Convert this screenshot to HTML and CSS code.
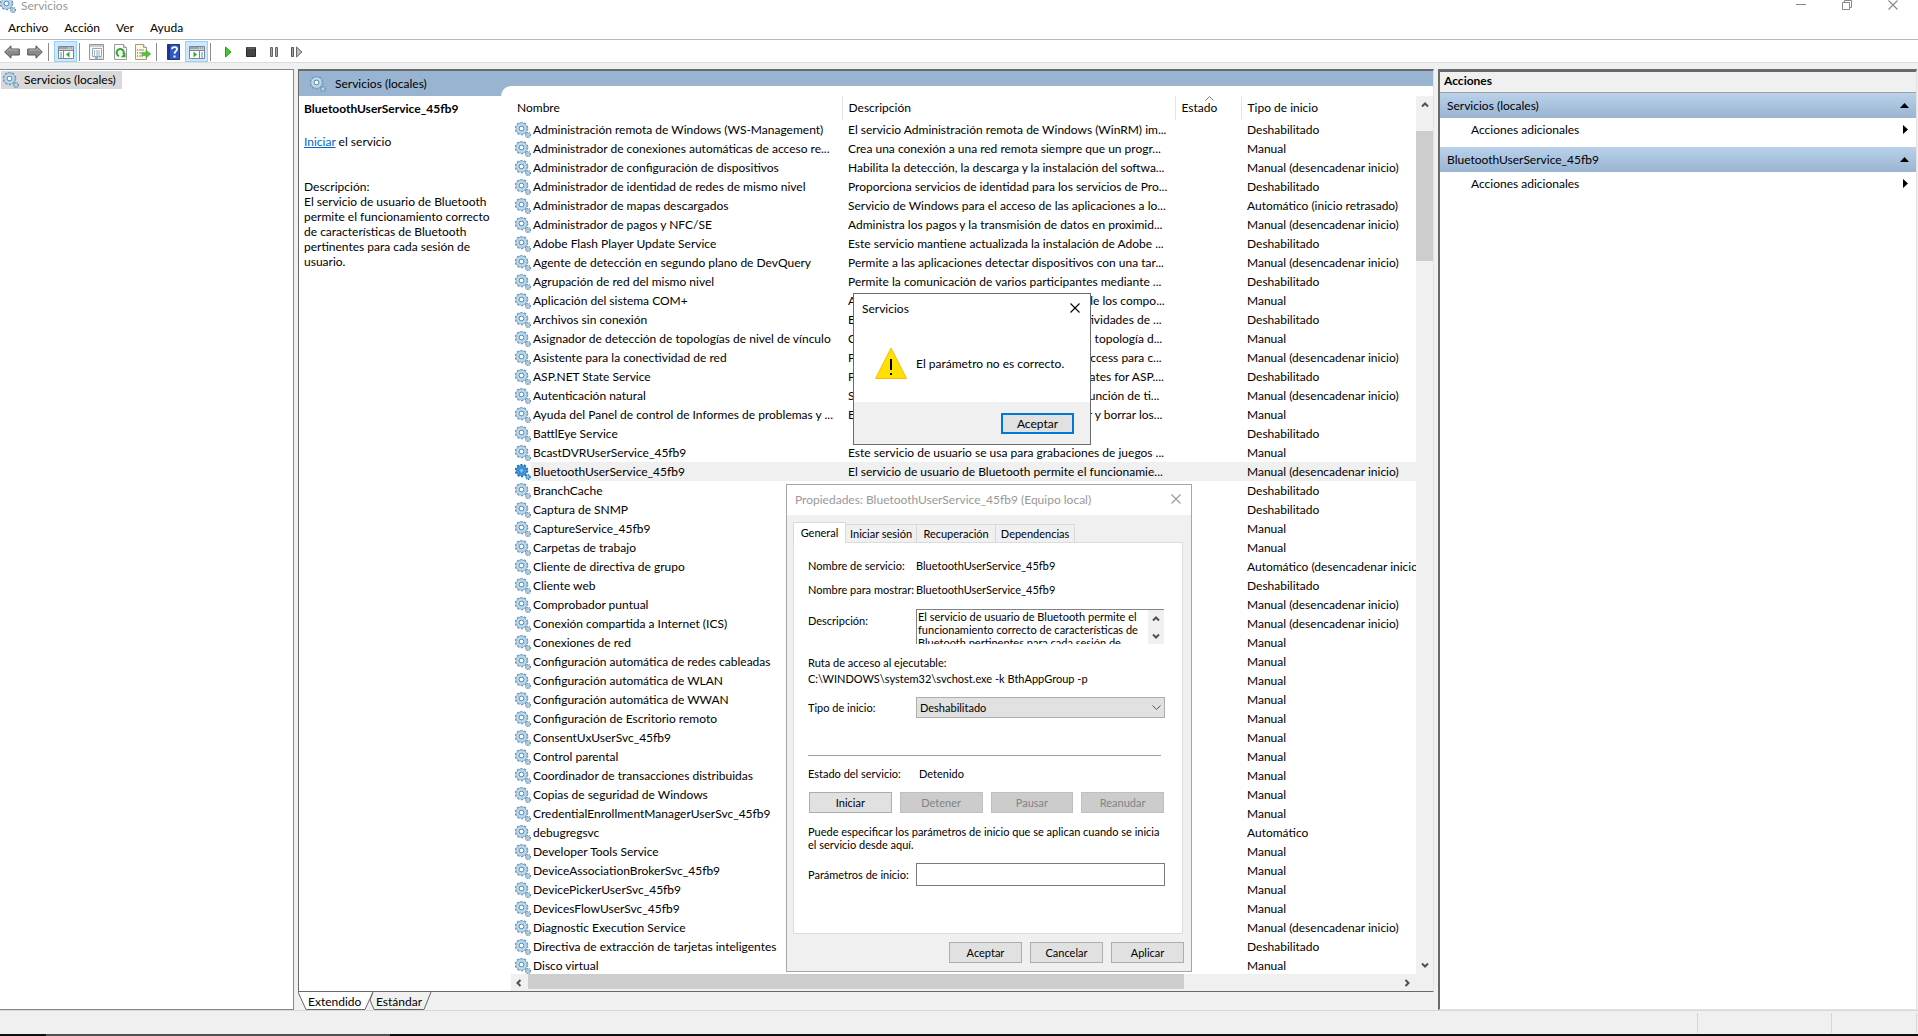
FILE: index.html
```html
<!DOCTYPE html>
<html lang="es">
<head>
  <meta charset="UTF-8" />
  <title>Servicios</title>
  <link rel="stylesheet" href="styles.css">
</head>
<body>

  <svg class="symbols" aria-hidden="true">
    <symbol id="gear" viewBox="0 0 16 16">
      <circle cx="6.5" cy="6.5" r="5.8" fill="none" stroke="#6796b8" stroke-width="2" stroke-dasharray="2.05 1.6" />
      <circle cx="6.5" cy="6.5" r="4.1" fill="none" stroke="#7ea9c6" stroke-width="3.6" />
      <circle cx="6.5" cy="6.5" r="4" fill="none" stroke="#b9d9ee" stroke-width="2.4" />
      <circle cx="6.5" cy="6.5" r="2.3" fill="#fff" stroke="#587f9c" stroke-width="0.9" />
      <circle cx="13" cy="13" r="2.4" fill="none" stroke="#6796b8" stroke-width="1.5" stroke-dasharray="1.1 0.7" />
      <circle cx="13" cy="13" r="1.4" fill="#fff" stroke="#8fb5cf" stroke-width="1.3" />
    </symbol>
    <symbol id="gear-selected" viewBox="0 0 16 16">
      <circle cx="6.5" cy="6.5" r="5.8" fill="none" stroke="#1c70b8" stroke-width="2" stroke-dasharray="2.05 1.6" />
      <circle cx="6.5" cy="6.5" r="3.9" fill="none" stroke="#2f86cc" stroke-width="3.4" />
      <circle cx="6.5" cy="6.5" r="3.7" fill="none" stroke="#5ba6de" stroke-width="1.6" stroke-dasharray="1 1" />
      <circle cx="6.5" cy="6.5" r="2.1" fill="#8cc6f2" stroke="#1c66aa" stroke-width="0.7" />
      <circle cx="13" cy="13" r="2.1" fill="#8cc6f2" stroke="#2277bd" stroke-width="1.6" stroke-dasharray="1.1 0.7" />
    </symbol>
    <symbol id="close" viewBox="0 0 10 10">
      <path d="M0.5 0.5 9.5 9.5M9.5 0.5 0.5 9.5" fill="none" stroke="currentColor" stroke-width="1.1" />
    </symbol>
    <symbol id="arrow-up" viewBox="0 0 8 8">
      <path d="M1 5.5 4 2.5 7 5.5" fill="none" stroke="currentColor" stroke-width="2" />
    </symbol>
    <symbol id="arrow-down" viewBox="0 0 8 8">
      <path d="M1 2.5 4 5.5 7 2.5" fill="none" stroke="currentColor" stroke-width="2" />
    </symbol>
    <symbol id="arrow-left" viewBox="0 0 8 8">
      <path d="M5.5 1 2.5 4 5.5 7" fill="none" stroke="currentColor" stroke-width="2" />
    </symbol>
    <symbol id="arrow-right" viewBox="0 0 8 8">
      <path d="M2.5 1 5.5 4 2.5 7" fill="none" stroke="currentColor" stroke-width="2" />
    </symbol>
  </svg>

  <header class="titlebar">
    <svg class="icon"><use href="#gear" /></svg>
    <span class="titlebar-text">Servicios</span>
    <div class="window-buttons">
      <button type="button" aria-label="Minimizar">
        <svg width="10" height="10"><path d="M0 4.5h10" stroke="#888" /></svg>
      </button>
      <button type="button" aria-label="Restaurar">
        <svg width="10" height="10" fill="none" stroke="#888"><path d="M.5 2.5h7v7h-7zM2.5 2V.5h7v7H8" /></svg>
      </button>
      <button type="button" aria-label="Cerrar">
        <svg width="10" height="10"><use href="#close" /></svg>
      </button>
    </div>
  </header>

  <nav class="menubar">
    <button type="button">Archivo</button>
    <button type="button">Acción</button>
    <button type="button">Ver</button>
    <button type="button">Ayuda</button>
  </nav>

  <div class="toolbar">
    <button type="button" aria-label="Atrás">
      <svg class="icon" viewBox="0 0 16 16"><path d="M.7 8 7 1.8V5h8.3v6H7v3.2z" fill="#8a8a8a" stroke="#555" /><path d="M2.5 7.5 6 4.5V6h8.3" fill="none" stroke="#b5b5b5" /></svg>
    </button>
    <button type="button" aria-label="Adelante">
      <svg class="icon" viewBox="0 0 16 16"><path d="M15.3 8 9 1.8V5H.7v6H9v3.2z" fill="#8a8a8a" stroke="#555" /><path d="M13.5 7.5 10 4.5V6H1.7" fill="none" stroke="#b5b5b5" /></svg>
    </button>
    <span class="separator"></span>
    <button type="button" class="active" aria-label="Mostrar u ocultar árbol de consola">
      <svg class="icon" viewBox="0 0 16 16"><path d="M.5 2.5h15v12H.5z" fill="#fff" stroke="#7d8791" /><path d="M1 3h14v2.5H1z" fill="#9aa4ae" /><path d="M10 4h1M12 4h1M14 4h1" stroke="#fff" /><path d="M1 6.5h14M5.5 7v7" stroke="#7d8791" /><path d="M2 9h2M2 11h2M2 13h2" stroke="#4a8bc2" /><path d="M11.5 7.5v6L8 10.5z" fill="#3aa52a" /></svg>
    </button>
    <span class="separator"></span>
    <button type="button" aria-label="Propiedades">
      <svg class="icon" viewBox="0 0 16 16"><path d="M.5.5h14v15H.5z" fill="#f4f6f8" stroke="#8b959e" /><path d="M1 2h13" stroke="#c5ccd3" stroke-width="2" /><path d="M3.5 4.5h9v8h-9z" fill="#fff" stroke="#9aa8b5" /><path d="M5 7h1M5 9h1M5 11h1" stroke="#3a7dbb" /><path d="M7 7h4M7 9h4M7 11h4" stroke="#9aa8b5" /><path d="M6 14h3" stroke="#35a7df" stroke-width="1.5" /><path d="M10 14h3" stroke="#aab4bd" /></svg>
    </button>
    <button type="button" aria-label="Actualizar">
      <svg class="icon" viewBox="0 0 16 16"><path d="M2.5.5h9l3 3v12h-12z" fill="#fafafa" stroke="#9a9a9a" /><path d="M11.5.5v3h3" fill="#ddd" stroke="#9a9a9a" /><path d="M7 12A3.6 3.6 0 1 1 11.3 10.5" fill="none" stroke="#35a52d" stroke-width="2" /><path d="M13.5 8.5v4.8H8.7z" fill="#35a52d" /></svg>
    </button>
    <button type="button" aria-label="Exportar lista">
      <svg class="icon" viewBox="0 0 16 16"><path d="M.5.5h8l3 3v12H.5z" fill="#fdf8dc" stroke="#a79b78" /><path d="M8.5.5v3h3" fill="#eee" stroke="#a79b78" /><path d="M2 6h1M2 9h1M2 12h1" stroke="#444" /><path d="M4 6h5M4 9h3M4 12h4" stroke="#7d8fb0" /><path d="M7 8.5h4V6l4.8 4-4.8 4v-2.5H7z" fill="#55c03c" stroke="#3c9e2b" stroke-width=".5" /></svg>
    </button>
    <span class="separator"></span>
    <button type="button" aria-label="Ayuda">
      <svg class="icon" viewBox="0 0 16 16"><path d="M1.5.5h12v15h-12z" fill="#2f57c4" stroke="#1c3787" /><path d="M2 1h2v14H2z" fill="#1c3787" /><path d="M6 5.2C6 2.3 11 2.3 11 5.2 11 7.2 8.5 7.2 8.5 9.8" fill="none" stroke="#fff" stroke-width="1.8" /><path d="M7.5 11.5h2v2h-2z" fill="#fff" /></svg>
    </button>
    <button type="button" class="active" aria-label="Mostrar u ocultar panel de acciones">
      <svg class="icon" viewBox="0 0 16 16"><path d="M.5 2.5h15v12H.5z" fill="#fff" stroke="#7d8791" /><path d="M1 3h14v2.5H1z" fill="#9aa4ae" /><path d="M10 4h1M12 4h1M14 4h1" stroke="#fff" /><path d="M1 6.5h14M10.5 7v7" stroke="#7d8791" /><path d="M12 9h2M12 11h2M12 13h2" stroke="#4a8bc2" /><path d="M4.5 7.5v6L8 10.5z" fill="#3aa52a" /></svg>
    </button>
    <span class="separator"></span>
    <button type="button" aria-label="Iniciar el servicio">
      <svg class="icon" viewBox="0 0 16 16"><path d="M5.5 3v10l5.5-5z" fill="#3ecb2c" stroke="#2a9a1d" /></svg>
    </button>
    <button type="button" aria-label="Detener el servicio">
      <svg class="icon" viewBox="0 0 16 16"><path d="M3.500 3.500h9v9h-9z" fill="#444" stroke="#2b2b2b" /><path d="M4 4h8" stroke="#777" /></svg>
    </button>
    <button type="button" aria-label="Pausar el servicio">
      <svg class="icon" viewBox="0 0 16 16"><path d="M4.500 3.500h2v9h-2zM9.500 3.500h2v9h-2z" fill="#a5a5a5" stroke="#666" /></svg>
    </button>
    <button type="button" aria-label="Reiniciar el servicio">
      <svg class="icon" viewBox="0 0 16 16"><path d="M2.500 3.500h2v9h-2z" fill="#a5a5a5" stroke="#555" /><path d="M7.500 3v10l5.500-5z" fill="#bdbdbd" stroke="#6a6a6a" /></svg>
    </button>
  </div>

  <main class="console">
    <aside class="tree">
      <a href="#" class="tree-item"><svg class="icon"><use href="#gear" /></svg>Servicios (locales)</a>
    </aside>

    <section class="center">
      <div class="view">
        <div class="banner"><svg class="icon"><use href="#gear" /></svg>Servicios (locales)</div>
        <div class="view-body">
          <div class="detail">
            <h2>BluetoothUserService_45fb9</h2>
            <p class="detail-action"><a href="#">Iniciar</a> el servicio</p>
            <p>Descripción:<br>El servicio de usuario de Bluetooth permite el funcionamiento correcto de características de Bluetooth pertinentes para cada sesión de usuario.</p>
          </div>
          <div class="list">
            <div class="list-scroll">
              <table>
                <thead>
                  <tr>
                    <th class="col-name">Nombre</th>
                    <th class="col-desc">Descripción</th>
                    <th class="col-state">Estado<svg class="sort" width="9" height="5"><path d="M.5 4.5 4.5.5l4 4" fill="none" stroke="#777" /></svg></th>
                    <th>Tipo de inicio</th>
                  </tr>
                </thead>
                <tbody id="services"></tbody>
              </table>
            </div>
            <div class="vscroll">
              <svg class="arrow"><use href="#arrow-up" /></svg>
              <div class="vtrack"><div class="vthumb"></div></div>
              <svg class="arrow"><use href="#arrow-down" /></svg>
            </div>
            <div class="hscroll">
              <svg class="arrow"><use href="#arrow-left" /></svg>
              <div class="htrack"><div class="hthumb"></div></div>
              <svg class="arrow"><use href="#arrow-right" /></svg>
            </div>
          </div>
        </div>
      </div>
      <div class="view-tabs">
        <button type="button" class="view-tab">
          <svg width="76" height="18"><path d="M0 0 8 17.5H67L75 0" fill="#fff" stroke="#666" /></svg>
          <span>Extendido</span>
        </button>
        <button type="button" class="view-tab second">
          <svg width="64" height="18"><path d="M4 0 1 8 5 17.5H55L62 0" fill="#f0f0f0" stroke="#666" /></svg>
          <span>Estándar</span>
        </button>
      </div>
    </section>

    <aside class="actions">
      <h2>Acciones</h2>
      <div class="group">Servicios (locales)<svg width="9" height="5"><path d="M0 5 4.5 0 9 5z" /></svg></div>
      <a href="#" class="action">Acciones adicionales<svg width="5" height="9"><path d="M0 0 5 4.5 0 9z" /></svg></a>
      <div class="group">BluetoothUserService_45fb9<svg width="9" height="5"><path d="M0 5 4.5 0 9 5z" /></svg></div>
      <a href="#" class="action">Acciones adicionales<svg width="5" height="9"><path d="M0 0 5 4.5 0 9z" /></svg></a>
    </aside>
  </main>

  <footer class="statusbar">
    <span class="status-main"></span>
    <span class="status-mid"></span>
    <span class="status-end"></span>
  </footer>
  <div class="taskbar"><span></span></div>

  <div class="window properties" role="dialog" aria-label="Propiedades">
    <div class="window-title">
      <span>Propiedades: BluetoothUserService_45fb9 (Equipo local)</span>
      <button type="button" aria-label="Cerrar"><svg width="10" height="10"><use href="#close" /></svg></button>
    </div>
    <div class="tabs">
      <button type="button" class="tab tab-current">General</button>
      <button type="button" class="tab">Iniciar sesión</button>
      <button type="button" class="tab">Recuperación</button>
      <button type="button" class="tab">Dependencias</button>
    </div>
    <form class="panel">
      <div class="field"><span>Nombre de servicio:</span><span>BluetoothUserService_45fb9</span></div>
      <div class="field"><span>Nombre para mostrar:</span><span>BluetoothUserService_45fb9</span></div>
      <div class="field field-desc">
        <label for="description">Descripción:</label>
        <div class="memo">
          <textarea id="description" readonly>El servicio de usuario de Bluetooth permite el
funcionamiento correcto de características de
Bluetooth pertinentes para cada sesión de
usuario.</textarea>
          <div class="memo-scroll">
            <svg class="arrow"><use href="#arrow-up" /></svg>
            <svg class="arrow"><use href="#arrow-down" /></svg>
          </div>
        </div>
      </div>
      <div class="path">Ruta de acceso al ejecutable:<br>C:\WINDOWS\system32\svchost.exe -k BthAppGroup -p</div>
      <div class="field field-type">
        <label for="startup">Tipo de inicio:</label>
        <div class="select">
          <select id="startup"><option>Deshabilitado</option></select>
          <svg width="9" height="5"><path d="M.5.5l4 4 4-4" fill="none" stroke="#555" /></svg>
        </div>
      </div>
      <hr>
      <div class="field field-state"><span>Estado del servicio:</span><span>Detenido</span></div>
      <div class="service-buttons">
        <button type="button">Iniciar</button>
        <button type="button" disabled>Detener</button>
        <button type="button" disabled>Pausar</button>
        <button type="button" disabled>Reanudar</button>
      </div>
      <p class="hint">Puede especificar los parámetros de inicio que se aplican cuando se inicia<br>el servicio desde aquí.</p>
      <div class="field">
        <label for="params">Parámetros de inicio:</label>
        <input type="text" id="params">
      </div>
    </form>
    <div class="window-footer">
      <button type="button">Aceptar</button>
      <button type="button">Cancelar</button>
      <button type="button">Aplicar</button>
    </div>
  </div>

  <div class="window message" role="alertdialog" aria-label="Servicios">
    <div class="window-title">
      <span>Servicios</span>
      <button type="button" aria-label="Cerrar"><svg width="10" height="10"><use href="#close" /></svg></button>
    </div>
    <div class="message-body">
      <svg width="32" height="32" viewBox="0 0 32 32">
        <path d="M16 1 31.5 31.5H.5z" fill="#ffe100" stroke="#fdb913" stroke-linejoin="round" />
        <path d="M15 12h2v11h-2zM15 26h2v2h-2z" fill="#000" />
      </svg>
      <span>El parámetro no es correcto.</span>
    </div>
    <div class="message-footer">
      <button type="button" class="default">Aceptar</button>
    </div>
  </div>

  <script src="script.js"></script>
</body>
</html>
```
FILE: styles.css
```css
* {
  box-sizing: border-box;
}
body {
  margin: 0;
  height: 100vh;
  display: flex;
  flex-direction: column;
  overflow: hidden;
  background-color: #f0f0f0;
  color: #000;
  font-family: Lato, "Open Sans", sans-serif;
  font-size: 12px;
  line-height: 15px;
}
button, input, select, textarea {
  font: inherit;
  color: inherit;
  margin: 0;
  padding: 0;
}
button {
  border: 0;
  background: none;
}
h2, p {
  margin: 0;
  font-size: inherit;
}
.symbols {
  position: absolute;
  width: 0;
  height: 0;
}
.icon {
  width: 16px;
  height: 16px;
  flex: none;
  display: block;
}

/* title, menu and tool bars */
.titlebar {
  display: flex;
  align-items: center;
  height: 16px;
  padding-bottom: 6px;
  background-color: #fff;
  color: #999;
}
.titlebar-text {
  flex: 1;
  padding-left: 5px;
}
.window-buttons {
  display: flex;
  padding-right: 2px;
  color: #888;
}
.window-buttons button {
  width: 46px;
  height: 10px;
  display: flex;
  justify-content: center;
}
.menubar {
  display: flex;
  gap: 16px;
  height: 24px;
  padding: 0 8px;
  background-color: #fff;
  border-bottom: 1px solid #b4b7bb;
}
.toolbar {
  display: flex;
  height: 23px;
  background-color: #fff;
  border-bottom: 1px solid #dcdcdc;
}
.toolbar button {
  width: 23px;
  height: 21px;
  margin-top: 1px;
  display: flex;
  align-items: center;
  justify-content: center;
}
.toolbar .active {
  background-color: #cce8ff;
  border: 1px solid #99d1ff;
}
.separator {
  width: 8px;
  height: 18px;
  margin-top: 3px;
  border-left: 2px solid #fff;
  background: linear-gradient(to right, #8d8d8d 1px, #fff 1px);
  background-clip: padding-box;
}

/* three panes */
.console {
  flex: 1;
  min-height: 0;
  display: grid;
  grid-template-columns: 294px 1fr 479px;
  gap: 4px;
  padding: 6px 1px 0 0;
}
.tree {
  background-color: #fff;
  border: 1px solid #828790;
  border-left: 0;
  padding: 1px;
}
.tree-item {
  display: inline-flex;
  align-items: center;
  gap: 5px;
  height: 18px;
  padding: 0 6px 1px 2px;
  background-color: #d9d9d9;
  color: #000;
  text-decoration: none;
}
.center {
  display: flex;
  flex-direction: column;
  min-width: 0;
  min-height: 0;
}
.view {
  flex: 1;
  min-height: 0;
  display: flex;
  flex-direction: column;
  background-color: #fff;
  border-top: 2px solid #696969;
  border-left: 1px solid #696969;
  border-right: 1px solid #e3e3e3;
  border-bottom: 1px solid #696969;
}
.banner {
  display: flex;
  align-items: center;
  gap: 9px;
  height: 25px;
  padding-left: 11px;
  background-color: #99b4d1;
}
.view-body {
  flex: 1;
  min-height: 0;
  display: flex;
}
.detail {
  width: 202px;
  padding: 5px 7px 0 5px;
}
.detail-action {
  margin: 18px 0 30px;
}
.detail-action a {
  color: #0066cc;
}
.list {
  flex: 1;
  min-width: 0;
  margin-top: -10px;
  padding: 10px 0 0 10px;
  border-top-left-radius: 10px;
  background-color: #fff;
  display: grid;
  grid-template: 1fr 17px / 1fr 17px;
}
.list-scroll {
  min-height: 0;
  overflow: hidden;
}
table {
  width: 100%;
  table-layout: fixed;
  border-collapse: collapse;
}
th {
  position: relative;
  height: 24px;
  padding: 0 6px 2px;
  border-right: 1px solid #e5e5e5;
  font-weight: normal;
  text-align: left;
}
th:last-child {
  border-right: 0;
}
.col-name {
  width: 331px;
}
.col-desc {
  width: 333px;
}
.col-state {
  width: 66px;
}
.sort {
  position: absolute;
  top: 0;
  left: 29px;
}
td {
  height: 19px;
  padding: 0 0 0 6px;
  overflow: hidden;
  white-space: nowrap;
}
.name {
  display: flex;
  align-items: center;
  gap: 2px;
  margin-left: -2px;
}
tr.selected td {
  background-color: #f0f0f0;
}
tr.selected td:first-child {
  background: linear-gradient(to right, #fff 20px, #f0f0f0 20px);
}
.arrow {
  width: 8px;
  height: 8px;
  color: #505050;
}
.vscroll {
  display: flex;
  flex-direction: column;
  align-items: center;
  padding: 5px 0;
  background-color: #f0f0f0;
}
.vtrack {
  flex: 1;
  width: 100%;
  padding-top: 22px;
}
.vthumb {
  height: 130px;
  background-color: #cdcdcd;
}
.hscroll {
  grid-column: 1 / -1;
  display: flex;
  align-items: center;
  padding: 0 22px 0 4px;
  background-color: #f0f0f0;
}
.htrack {
  flex: 1;
  height: 100%;
  padding-left: 5px;
}
.hthumb {
  width: 75%;
  height: 15px;
  background-color: #cdcdcd;
}
.view-tabs {
  display: flex;
  height: 18px;
}
.view-tab {
  position: relative;
  height: 18px;
}
.view-tab svg {
  display: block;
}
.view-tab span {
  position: absolute;
  top: 2px;
  left: 10px;
}
.second {
  margin-left: -5px;
}
.second span {
  left: 7px;
}

/* actions pane */
.actions {
  background-color: #fff;
  border: 1px solid #e3e3e3;
  border-top: 3px solid #696969;
  border-left: 2px solid #696969;
}
.actions h2 {
  height: 21px;
  padding: 1px 4px;
  background-color: #f0f0f0;
  border-bottom: 1px solid #a0a0a0;
}
.group, .action {
  display: flex;
  align-items: center;
  justify-content: space-between;
  color: #000;
  text-decoration: none;
}
.group {
  height: 25px;
  padding: 0 7px;
  background: linear-gradient(#bad2eb, #99b4d1);
}
.action {
  height: 23px;
  margin-bottom: 6px;
  padding: 0 8px 0 31px;
}

/* bottom strips */
.statusbar {
  display: flex;
  height: 24px;
  padding: 2px 1px 1px 0;
  border-top: 1px solid #d7d7d7;
}
.statusbar span {
  border-right: 1px solid #d7d7d7;
}
.status-main {
  flex: 1;
}
.status-mid {
  width: 134px;
}
.status-end {
  width: 85px;
}
.taskbar {
  height: 2px;
  padding-left: 46px;
  background-color: #101010;
}
.taskbar span {
  display: block;
  width: 344px;
  height: 2px;
  background-color: #505050;
}

/* floating windows */
.window {
  position: absolute;
  display: flex;
  flex-direction: column;
  background-color: #f0f0f0;
  border: 1px solid #a6a6a6;
}
.window-title {
  display: flex;
  align-items: center;
  justify-content: space-between;
  height: 30px;
  padding: 0 10px 2px 8px;
  background-color: #fff;
}
.window-title button {
  height: 10px;
  display: flex;
}
.window-footer, .message-footer {
  display: flex;
  justify-content: flex-end;
  gap: 8px;
}
.window-footer button, .message-footer button {
  width: 73px;
  height: 21px;
  background-color: #e1e1e1;
  border: 1px solid #adadad;
}
.properties {
  top: 484px;
  left: 786px;
  width: 406px;
  height: 488px;
  padding-bottom: 8px;
  font-size: 11px;
  line-height: 13px;
}
.properties .window-title {
  font-size: 12px;
  color: #999;
}
.tabs {
  display: flex;
  align-items: flex-end;
  height: 27px;
  padding: 0 6px;
}
.tab {
  height: 18px;
  padding: 0 4px;
  border: 1px solid #d9d9d9;
  border-left: 0;
  border-bottom: 0;
  white-space: nowrap;
  flex: 0 0 79px;
}
.tab:nth-child(2) {
  flex-basis: 71px;
}
.tab-current {
  position: relative;
  flex-basis: 53px;
  height: 21px;
  margin-bottom: -1px;
  padding-bottom: 2px;
  border-left: 1px solid #d9d9d9;
  background-color: #fff;
}
.panel {
  flex: 1;
  margin: 0 8px 8px 6px;
  padding: 16px 17px 0 14px;
  background-color: #fff;
  border: 1px solid #dcdcdc;
}
.field {
  display: grid;
  grid-template-columns: 108px 1fr;
  align-items: center;
  margin-bottom: 11px;
}
.field-desc {
  align-items: start;
  margin: 13px 0 11px;
}
.field label {
  white-space: nowrap;
}
.field-desc label {
  padding-top: 5px;
}
.memo {
  display: flex;
  height: 35px;
  margin-right: 1px;
  border-top: 1px solid #828282;
  border-left: 1px solid #828282;
}
.memo textarea {
  flex: 1;
  min-width: 0;
  height: 34px;
  padding: 0 1px;
  border: 0;
  background: none;
  resize: none;
  overflow: hidden;
  white-space: pre;
}
.memo-scroll {
  width: 16px;
  display: flex;
  flex-direction: column;
  align-items: center;
  justify-content: space-around;
  background-color: #f0f0f0;
}
.path {
  line-height: 16px;
}
.field-type {
  margin: 10px 0 37px;
}
.select {
  position: relative;
}
.select select {
  display: block;
  width: 100%;
  height: 21px;
  padding: 0 3px;
  appearance: none;
  background-color: #e1e1e1;
  border: 1px solid #adadad;
  border-radius: 0;
}
.select svg {
  position: absolute;
  top: 8px;
  right: 4px;
}
hr {
  margin: 0 4px 11px 0;
  border: 0;
  border-top: 1px solid #a0a0a0;
}
.field-state {
  grid-template-columns: 111px 1fr;
  margin-bottom: 12px;
}
.service-buttons {
  display: flex;
  gap: 8px;
  margin: 0 1px 12px;
}
.service-buttons button {
  flex: 1;
  height: 21px;
  background-color: #e1e1e1;
  border: 1px solid #adadad;
}
.service-buttons button:disabled {
  background-color: #ccc;
  border-color: #bfbfbf;
  color: #838383;
}
.hint {
  margin-bottom: 12px;
  white-space: nowrap;
}
.field input {
  height: 23px;
  width: 100%;
  background-color: #fff;
  border: 1px solid #7a7a7a;
}
.window-footer {
  padding-right: 7px;
}
.message {
  top: 293px;
  left: 853px;
  width: 238px;
  height: 152px;
  border-color: #6b6b6b;
}
.message-body {
  flex: 1;
  display: flex;
  align-items: center;
  gap: 9px;
  padding-left: 21px;
  background-color: #fff;
}
.message-footer {
  height: 42px;
  padding: 11px 16px 0 0;
}
.message-footer .default {
  border: 2px solid #0078d7;
}
```
FILE: script.js
```js
const D = "Deshabilitado";
const M = "Manual";
const MT = "Manual (desencadenar inicio)";

// name, description, startup type
const services = [
  ["Administración remota de Windows (WS-Management)", "El servicio Administración remota de Windows (WinRM) im...", D],
  ["Administrador de conexiones automáticas de acceso re...", "Crea una conexión a una red remota siempre que un progr...", M],
  ["Administrador de configuración de dispositivos", "Habilita la detección, la descarga y la instalación del softwa...", MT],
  ["Administrador de identidad de redes de mismo nivel", "Proporciona servicios de identidad para los servicios de Pro...", D],
  ["Administrador de mapas descargados", "Servicio de Windows para el acceso de las aplicaciones a lo...", "Automático (inicio retrasado)"],
  ["Administrador de pagos y NFC/SE", "Administra los pagos y la transmisión de datos en proximid...", MT],
  ["Adobe Flash Player Update Service", "Este servicio mantiene actualizada la instalación de Adobe ...", D],
  ["Agente de detección en segundo plano de DevQuery", "Permite a las aplicaciones detectar dispositivos con una tar...", MT],
  ["Agrupación de red del mismo nivel", "Permite la comunicación de varios participantes mediante ...", D],
  ["Aplicación del sistema COM+", "Administra la configuración y un seguimiento de los compo...", M],
  ["Archivos sin conexión", "El servicio Archivos sin conexión realiza las actividades de ...", D],
  ["Asignador de detección de topologías de nivel de vínculo", "Crea un mapa de red, con información sobre la topología d...", M],
  ["Asistente para la conectividad de red", "Proporciona notificación de estado de DirectAccess para c...", MT],
  ["ASP.NET State Service", "Provides support for out-of-process session states for ASP....", D],
  ["Autenticación natural", "Servicio agregador de señales, que evalúa en función de ti...", MT],
  ["Ayuda del Panel de control de Informes de problemas y ...", "Este servicio proporciona ayuda para visualizar y borrar los...", M],
  ["BattlEye Service", "", D],
  ["BcastDVRUserService_45fb9", "Este servicio de usuario se usa para grabaciones de juegos ...", M],
  ["BluetoothUserService_45fb9", "El servicio de usuario de Bluetooth permite el funcionamie...", MT],
  ["BranchCache", "", D],
  ["Captura de SNMP", "", D],
  ["CaptureService_45fb9", "", M],
  ["Carpetas de trabajo", "", M],
  ["Cliente de directiva de grupo", "", "Automático (desencadenar inicio)"],
  ["Cliente web", "", D],
  ["Comprobador puntual", "", MT],
  ["Conexión compartida a Internet (ICS)", "", MT],
  ["Conexiones de red", "", M],
  ["Configuración automática de redes cableadas", "", M],
  ["Configuración automática de WLAN", "", M],
  ["Configuración automática de WWAN", "", M],
  ["Configuración de Escritorio remoto", "", M],
  ["ConsentUxUserSvc_45fb9", "", M],
  ["Control parental", "", M],
  ["Coordinador de transacciones distribuidas", "", M],
  ["Copias de seguridad de Windows", "", M],
  ["CredentialEnrollmentManagerUserSvc_45fb9", "", M],
  ["debugregsvc", "", "Automático"],
  ["Developer Tools Service", "", M],
  ["DeviceAssociationBrokerSvc_45fb9", "", M],
  ["DevicePickerUserSvc_45fb9", "", M],
  ["DevicesFlowUserSvc_45fb9", "", M],
  ["Diagnostic Execution Service", "", MT],
  ["Directiva de extracción de tarjetas inteligentes", "", D],
  ["Disco virtual", "Proporciona servicios de administración de discos, volú...", M]
];

const selected = "BluetoothUserService_45fb9";

document.getElementById("services").innerHTML = services.map(([name, desc, type]) => {
  const current = name === selected;
  return `<tr class="${current ? "selected" : ""}">
    <td><div class="name"><svg class="icon"><use href="#${current ? "gear-selected" : "gear"}" /></svg>${name}</div></td>
    <td>${desc}</td><td></td><td>${type}</td>
  </tr>`;
}).join("");
```
